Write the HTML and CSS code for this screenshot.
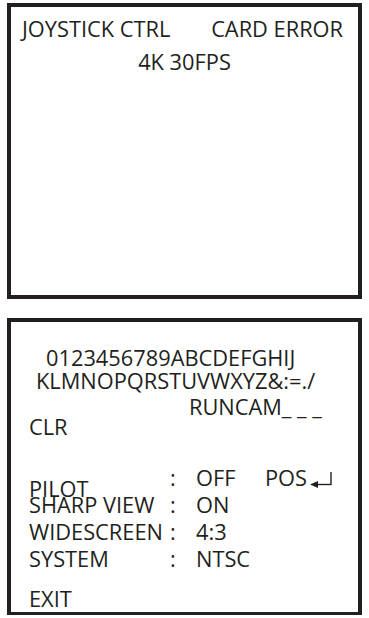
FILE: index.html
```html
<!DOCTYPE html>
<html>
<head>
<meta charset="utf-8">
<link rel="stylesheet" href="styles.css">
</head>
<body>
<div class="screen screen-top">
  <div class="top-row">
    <span>JOYSTICK CTRL</span>
    <span>CARD ERROR</span>
  </div>
  <div class="res">4K 30FPS</div>
</div>
<div class="screen screen-bottom">
  <div class="line chars1">0123456789ABCDEFGHIJ</div>
  <div class="line chars2">KLMNOPQRSTUVWXYZ&amp;:=./</div>
  <div class="line name">RUNCAM_ _ _</div>
  <div class="line clr">CLR</div>
  <div class="menu-row row-off">
    <span class="label"></span><span class="colon">:</span><span class="value">OFF</span>
    <span class="pos">POS<svg class="enter" viewBox="0 0 22 16" width="22" height="16"><polygon points="0,12.5 8,9 8,16"/><line x1="7" y1="12.5" x2="21" y2="12.5"/><line x1="21" y1="0" x2="21" y2="13.1"/></svg></span>
  </div>
  <div class="line pilot">PILOT</div>
  <div class="menu-row row-sharp">
    <span class="label">SHARP VIEW</span><span class="colon">:</span><span class="value">ON</span>
  </div>
  <div class="menu-row row-wide">
    <span class="label">WIDESCREEN</span><span class="colon">:</span><span class="value">4:3</span>
  </div>
  <div class="menu-row row-system">
    <span class="label">SYSTEM</span><span class="colon">:</span><span class="value">NTSC</span>
  </div>
  <div class="line exit">EXIT</div>
</div>
</body>
</html>
```
FILE: styles.css
```css
html, body {
  margin: 0;
  padding: 0;
  background: #fff;
}
body {
  padding: 3px 0 0 7px;
  font-family: "Open Sans", "Noto Sans", sans-serif;
  font-size: 21.8px;
  line-height: 16px;
  color: #231f20;
}
.screen {
  box-sizing: border-box;
  width: 355px;
  border: 4px solid #231f20;
  overflow: hidden;
}
.screen-top {
  height: 296px;
}
.screen-bottom {
  height: 297px;
  margin-top: 19px;
  border-bottom-width: 3px;
}
.top-row {
  display: flex;
  justify-content: space-between;
  margin-top: 13.8px;
  padding: 0 15px 0 11px;
  white-space: nowrap;
}
.res {
  margin-top: 17.7px;
  text-align: center;
}
.line {
  white-space: nowrap;
  height: 16px;
}
.chars1 { margin-top: 28.2px; padding-left: 35px; }
.chars2 { margin-top: 7.3px; padding-left: 25px; }
.name { margin-top: 10px; padding-left: 178px; }
.clr { margin-top: 3.3px; padding-left: 18px; }
.menu-row {
  display: grid;
  grid-template-columns: 141px 26px 69px auto;
  padding-left: 18px;
  height: 16px;
  white-space: nowrap;
}
.row-off { margin-top: 35.4px; }
.pilot { margin-top: -4.7px; padding-left: 18px; }
.row-sharp { margin-top: -0.7px; }
.row-wide { margin-top: 11.7px; }
.row-system { margin-top: 11px; }
.exit { margin-top: 24px; padding-left: 18px; }
.pos {
  margin-top: -6.7px;
  display: flex;
  align-items: flex-end;
}
.enter {
  margin-left: 3px;
  margin-bottom: -2px;
  fill: #231f20;
  stroke: #231f20;
  stroke-width: 1.4;
}
.enter polygon { stroke: none; }
```
